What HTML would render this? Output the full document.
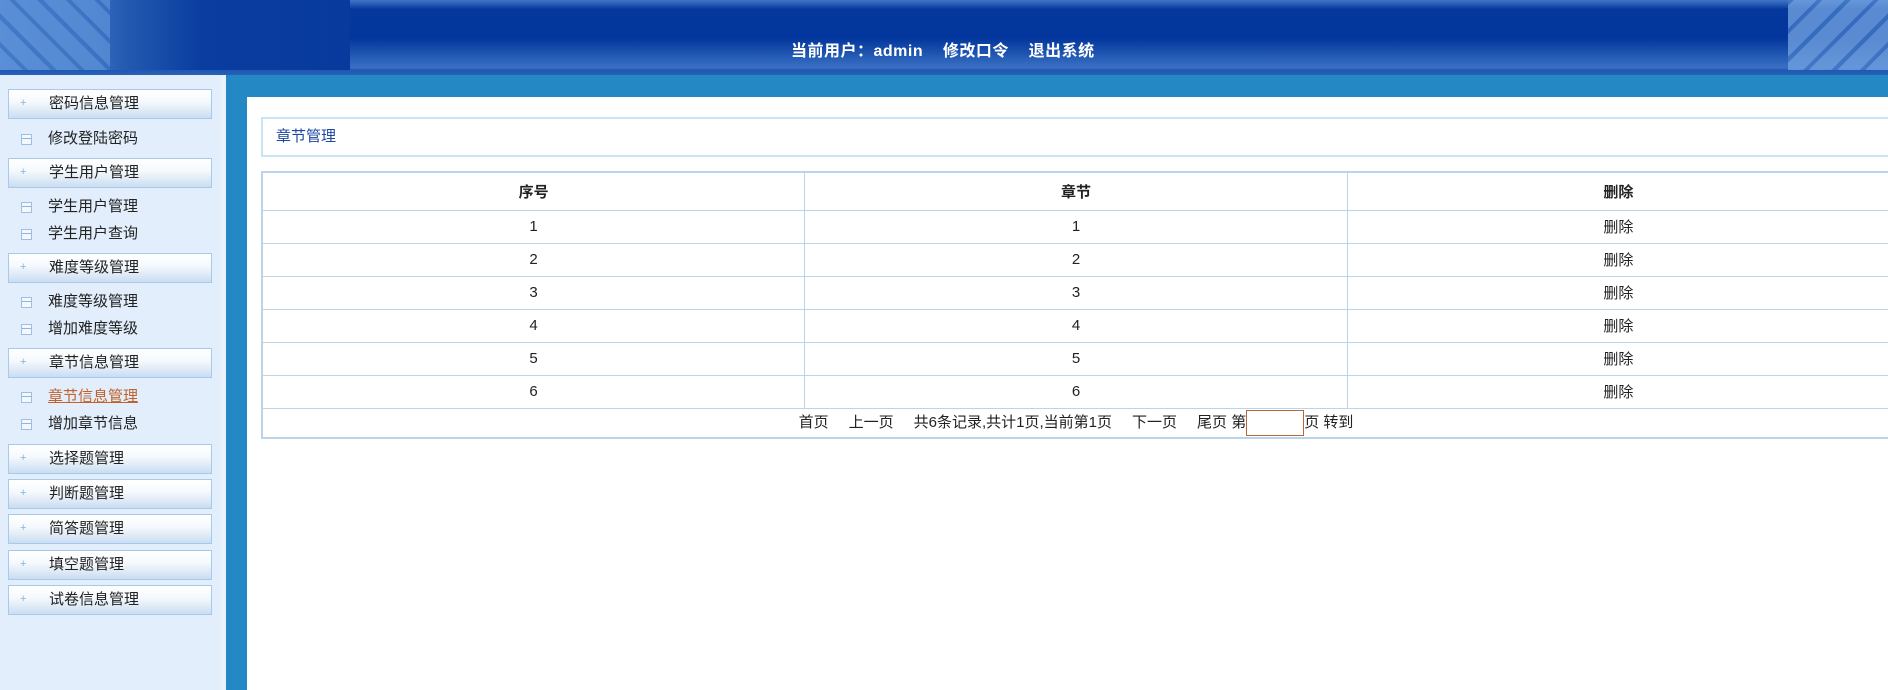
<!DOCTYPE html>
<html><head><meta charset="utf-8"><style>
*{margin:0;padding:0;box-sizing:border-box}
body{width:1888px;height:690px;overflow:hidden;background:#fff;font-family:"Liberation Sans","Noto Sans CJK SC",sans-serif;font-size:15px;color:#222;position:relative}
#hd{position:absolute;left:0;top:0;width:1888px;height:75px;background:linear-gradient(#3f75c4 0,#2a5cb4 4px,#05389c 9px,#03369c 38px,#1c52ae 52px,#2f66bc 62px,#3a6fc2 68px,#1f58b2 70px,#2760b8 75px)}
#hd .l{position:absolute;left:0;top:0;width:350px;height:70px;background:linear-gradient(90deg,#4f86d0 0,#3c73c4 80px,#2358b0 130px,#0a3d9f 200px,#083a9e 350px)}
#hd .l2{position:absolute;left:0;top:0;width:110px;height:70px;background:repeating-linear-gradient(45deg,#5d92d8 0,#5d92d8 16px,#3e74c4 16px,#3e74c4 20px);opacity:.75}
#hd .r{position:absolute;right:0;top:0;width:100px;height:70px;background:repeating-linear-gradient(-45deg,#6f9fdf 0,#6f9fdf 16px,#4379c6 16px,#4379c6 20px);opacity:.8}
#hd .t{position:absolute;left:791px;top:37px;color:#fff;font-weight:bold;font-size:16px;letter-spacing:.5px;white-space:pre}
#side{position:absolute;left:0;top:75px;width:226px;height:615px;background:#e2eefb;border-right:5px solid #eaf3fc}
#blue{position:absolute;left:226px;top:75px;width:1662px;height:615px;background:#2388c4}
#main{position:absolute;left:247px;top:97px;width:1641px;height:593px;background:#fff}
.hb{position:absolute;left:8px;width:204px;height:30px;border:1px solid #a7c9ec;background:linear-gradient(#fff 0,#f6fafd 40%,#dde9f6 75%,#c9ddf2 100%);font-size:15px;line-height:28px;padding-left:40px}
.hb:before{content:"+";position:absolute;left:11px;top:-1px;color:#8ab3e0;font-size:11px}
.si{position:absolute;left:48px;font-size:15px;line-height:18px}
.si:before{content:"";position:absolute;left:-27px;top:4px;width:9px;height:9px;border:1px solid #9bbfe6;background:linear-gradient(#f4f8fd 0,#f4f8fd 3px,#8fb4e0 3px,#8fb4e0 4px,#f4f8fd 4px)}
.si.a{color:#c0622a;text-decoration:underline}
#title{position:absolute;left:261px;top:117px;width:1627px;height:40px;border:2px solid #c7e6f5;border-right:none;color:#1e48a0;font-size:15px;line-height:36px;padding-left:13px}
table{position:absolute;left:261px;top:171px;width:1630px;border-collapse:collapse;border:2px solid #bcd3ea;font-size:15px}
td,th{border:1px solid #bcd3ea;text-align:center;height:33px;width:542px}
th{height:38px;font-weight:bold}
tr.f td{height:30px}
.g{display:inline-block;width:20px}
.in{display:inline-block;width:58px;height:26px;border:1px solid #b5683c;vertical-align:middle}
</style></head><body>
<div id="hd"><div class="l"></div><div class="l2"></div><div class="r"></div><div class="t">当前用户：admin    修改口令    退出系统</div></div>
<div id="side"></div>
<div class="hb" style="top:89px">密码信息管理</div>
<div class="si" style="top:130px">修改登陆密码</div>
<div class="hb" style="top:158px">学生用户管理</div>
<div class="si" style="top:198px">学生用户管理</div>
<div class="si" style="top:225px">学生用户查询</div>
<div class="hb" style="top:253px">难度等级管理</div>
<div class="si" style="top:293px">难度等级管理</div>
<div class="si" style="top:320px">增加难度等级</div>
<div class="hb" style="top:348px">章节信息管理</div>
<div class="si a" style="top:388px">章节信息管理</div>
<div class="si" style="top:415px">增加章节信息</div>
<div class="hb" style="top:444px">选择题管理</div>
<div class="hb" style="top:479px">判断题管理</div>
<div class="hb" style="top:514px">简答题管理</div>
<div class="hb" style="top:550px">填空题管理</div>
<div class="hb" style="top:585px">试卷信息管理</div>
<div id="blue"></div>
<div id="main"></div>
<div id="title">章节管理</div>
<table>
<tr><th>序号</th><th>章节</th><th>删除</th></tr>
<tr><td>1</td><td>1</td><td>删除</td></tr>
<tr><td>2</td><td>2</td><td>删除</td></tr>
<tr><td>3</td><td>3</td><td>删除</td></tr>
<tr><td>4</td><td>4</td><td>删除</td></tr>
<tr><td>5</td><td>5</td><td>删除</td></tr>
<tr><td>6</td><td>6</td><td>删除</td></tr>
<tr class="f"><td colspan="3" style="width:auto">首页<span class="g"></span>上一页<span class="g"></span>共6条记录,共计1页,当前第1页<span class="g"></span>下一页<span class="g"></span>尾页 第<span class="in"></span>页 转到</td></tr>
</table>
</body></html>
